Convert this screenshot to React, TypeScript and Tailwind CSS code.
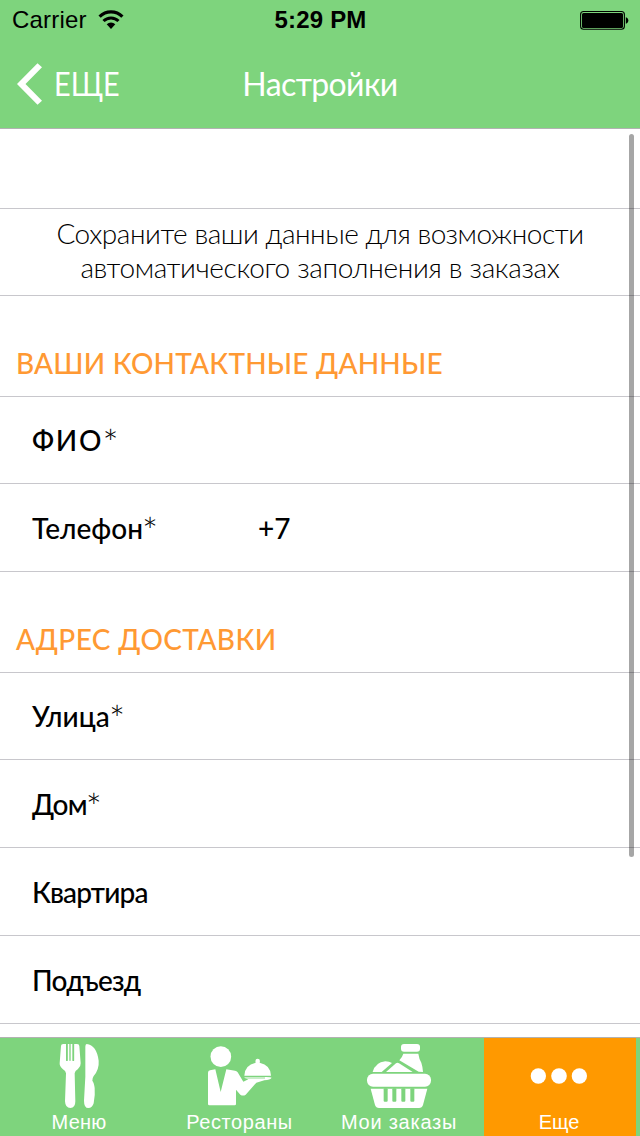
import type { ReactNode } from 'react';

function StatusBar() {
  return (
    <div className="grid h-10 grid-cols-3 items-center pr-[11px] pl-3 font-['Liberation_Sans',sans-serif] text-[24px] leading-[40px] text-black">
      <div className="flex items-center gap-[11px]">
        <span className="tracking-[0.2px]">Carrier</span>
        <svg className="h-5 w-[26px]" viewBox="0 0 26 20" fill="none" stroke="#000">
          <path d="M1.6 6.6a16.2 16.2 0 0 1 22.8 0" strokeWidth="3.2" />
          <path d="M5.5 11a10.6 10.6 0 0 1 15 0" strokeWidth="3" />
          <path d="M8.7 14.3a6.3 6.3 0 0 1 8.6 0L13 19z" fill="#000" stroke="none" />
        </svg>
      </div>
      <span className="text-center font-bold tracking-[0.2px]">5:29 PM</span>
      <svg className="h-5 w-[50px] justify-self-end" viewBox="0 0 50 20">
        <rect x="1.6" y="1.5" width="43.8" height="17.8" rx="3" fill="none" stroke="#000" strokeWidth="1.1" />
        <rect x="3" y="2.9" width="41" height="15" rx="1.5" />
        <path d="M46.8 7.2c3.4.8 3.4 5.8 0 6.6z" />
      </svg>
    </div>
  );
}

function NavBar() {
  return (
    <div className="grid h-[88px] grid-cols-[200px_1fr_200px] items-center text-[32px] leading-[88px] text-white">
      <div className="flex items-center gap-3 pl-4">
        <svg className="h-[44px] w-[26px]" viewBox="16 62 26 44" fill="#fff">
          <path d="M17 84 37.5 63.2 42 67.2 25.5 84 42 100.8 37.5 104.8z" />
        </svg>
        <span className="origin-left scale-x-90">ЕЩЕ</span>
      </div>
      <h1 className="text-center tracking-[-0.6px]">Настройки</h1>
      <span />
    </div>
  );
}

function SectionTitle({ children }: { children: ReactNode }) {
  return (
    <div className="h-[101px] border-b border-[#c8c7cc] pt-[50px] pl-4 text-[28px] leading-[34px] font-medium text-[#ff9933]">
      {children}
    </div>
  );
}

function Star() {
  return <span className="-ml-px align-[-6px] text-[38px] leading-[0] font-light tracking-normal">*</span>;
}

function Row({ label, value, short }: { label: ReactNode; value?: string; short?: boolean }) {
  return (
    <div
      className={`flex items-center border-b border-[#c8c7cc] pl-8 text-[28px] leading-[34px] font-medium text-black ${short ? 'h-[87px]' : 'h-[88px]'}`}
    >
      <span className="h-[34px] w-[226px]">{label}</span>
      {value && <span>{value}</span>}
    </div>
  );
}

function Tab({ icon, label }: { icon: ReactNode; label: ReactNode }) {
  return (
    <div className="flex w-[160px] flex-col items-center">
      <svg className="h-[72px] w-[160px]" viewBox="0 54 480 216" fill="#fff">
        {icon}
      </svg>
      <span className="font-['Liberation_Sans',sans-serif] text-[20px] leading-6 text-white">{label}</span>
    </div>
  );
}

const forkKnife = (
  <>
    <path d="M190 72h41q7 0 7 6l4 52q1 8-8 17-10 6-10 13l2 84q0 20-15 20t-16-20l3-84q0-7-10-13-10-9-9-17l4-52q0-6 7-6z" />
    <g fill="#7ed47d">
      <rect x="198" y="68" width="5.500" height="55" rx="2.500" />
      <rect x="208" y="68" width="4" height="55" rx="2" />
      <rect x="217" y="68" width="5.500" height="55" rx="2.500" />
    </g>
    <path d="M260 72q-4 0-4 8v90l-4 72q0 22 13 22 12 0 16-14 5-24 3-46-2-16-7-22-1-6 4-14 17-20 15-46-6-46-36-50z" />
  </>
);

const waiter = (
  <>
    <circle cx="182.500" cy="110" r="31" />
    <path d="M144 158q0-6 6-7l16-3 16 68 17-68 26 4q5 1 8 5l17 28 15-7q-10-1-13-7h66q16 0 17 2-4 6-22 8l-24 7-32 36q-8 5-16 0l-13-15v43q0 4-4 4h-76q-4 0-4-4z" />
    <path d="M253 167q1-32 34-39-3-12 6-12t6 12q33 7 34 39z" />
    <path d="M250 174h65" stroke="#7ed47d" strokeWidth="2.500" />
  </>
);

const basket = (
  <>
    <rect x="243" y="72" width="57" height="23" rx="9" />
    <path d="M250 101h45q2 15 9 27 4 12 5 28l-13-1-58-34q9-10 12-20z" />
    <path d="M158 156q8-29 38-32 12 0 20 5l-31 27z" />
    <path d="M198 156 228 130q4-3 9 0l41 26z" />
    <rect x="141" y="161" width="192" height="39" rx="18" />
    <path d="M152 206h170l-13 49q-3 9-12 9H177q-9 0-12-9z" />
    <g fill="#7ed47d">
      <rect x="191" y="205" width="12" height="40" rx="3" />
      <rect x="217" y="205" width="12" height="40" rx="3" />
      <rect x="244" y="205" width="12" height="40" rx="3" />
      <rect x="271" y="205" width="12" height="40" rx="3" />
    </g>
  </>
);

const dots = (
  <>
    <circle cx="175" cy="168" r="23" />
    <circle cx="237" cy="168" r="23.500" />
    <circle cx="298" cy="168" r="23" />
  </>
);

export default function App() {
  return (
    <div className="relative flex h-[1136px] w-[640px] flex-col overflow-hidden bg-white font-['Lato',sans-serif]">
      <header className="h-[129px] shrink-0 border-b border-[#b2b2b2] bg-[#7ed47d]">
        <StatusBar />
        <NavBar />
      </header>

      <main className="min-h-0 flex-1 overflow-hidden">
        <div className="h-20 border-b border-[#c8c7cc]" />
        <p className="h-[87px] border-b border-[#c8c7cc] pt-[7px] text-center text-[28px] leading-[34px] font-light text-black">
          <span className="tracking-[-0.45px]">Сохраните ваши данные для возможности</span>
          <br />
          <span className="tracking-[-0.32px]">автоматического заполнения в заказах</span>
        </p>

        <SectionTitle>
          <span className="tracking-[0.2px]">ВАШИ КОНТАКТНЫЕ ДАННЫЕ</span>
        </SectionTitle>
        <Row short label={<span className="tracking-[1.8px]">ФИО<Star /></span>} />
        <Row label={<span>Телефон<Star /></span>} value="+7" />

        <SectionTitle>
          <span className="tracking-[0.4px]">АДРЕС ДОСТАВКИ</span>
        </SectionTitle>
        <Row short label={<span className="tracking-[0.1px]">Улица<Star /></span>} />
        <Row label={<span className="tracking-[-0.8px]">Дом<Star /></span>} />
        <Row label={<span className="tracking-[-0.8px]">Квартира</span>} />
        <Row label={<span className="tracking-[-0.75px]">Подъезд</span>} />
      </main>

      <nav className="flex h-[99px] shrink-0 border-t border-[#b2b2b2] bg-[#7ed47d]">
        <Tab icon={forkKnife} label={<span className="mr-0.5 tracking-[0.2px]">Меню</span>} />
        <Tab icon={waiter} label={<span className="mr-px tracking-[0.6px]">Рестораны</span>} />
        <Tab icon={basket} label={<span className="mr-0.5 tracking-[0.75px]">Мои заказы</span>} />
        <div className="flex w-[160px] justify-center px-1">
          <div className="flex w-[152px] justify-center bg-[#ff9900]">
            <Tab icon={dots} label={<span className="mr-0.5">Еще</span>} />
          </div>
        </div>
      </nav>

      <div className="absolute top-[134px] left-[629px] h-[723px] w-[5px] rounded-full bg-black/35" />
    </div>
  );
}
